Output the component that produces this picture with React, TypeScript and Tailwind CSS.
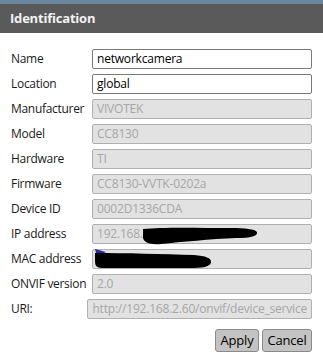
import React from "react";

type Field = { label: string; value: string; editable?: boolean; redact?: "ip" | "mac" };

const FIELDS: Field[] = [
  { label: "Name", value: "networkcamera", editable: true },
  { label: "Location", value: "global", editable: true },
  { label: "Manufacturer", value: "VIVOTEK" },
  { label: "Model", value: "CC8130" },
  { label: "Hardware", value: "TI" },
  { label: "Firmware", value: "CC8130-VVTK-0202a" },
  { label: "Device ID", value: "0002D1336CDA" },
  { label: "IP address", value: "192.168.", redact: "ip" },
  { label: "MAC address", value: "", redact: "mac" },
  { label: "ONVIF version", value: "2.0" },
  { label: "URI:", value: "http://192.168.2.60/onvif/device_service" },
];

function Redaction({ kind }: { kind: "ip" | "mac" }) {
  if (kind === "ip") {
    return (
      <svg className="absolute left-[48px] top-[1px]" width="118" height="20" viewBox="0 0 118 20">
        <path d="M2 3 C20 1 60 2 90 2 C104 2 114 3 116 6 C117 10 110 12 95 12 C70 13 40 16 20 18 C8 19 3 16 2 12 Z" fill="#000" />
      </svg>
    );
  }
  return (
    <svg className="absolute left-[1px] top-[-3px]" width="120" height="24" viewBox="0 0 120 24">
      <path d="M1 2 L3 10 L12 5 Z" fill="#2a2aa0" />
      <path d="M1 6 C30 6 70 7 100 8 C112 9 117 11 117 15 C117 20 108 21 95 21 C60 21 30 21 8 21 C2 21 1 18 1 14 Z" fill="#000" />
    </svg>
  );
}

export default function App() {
  return (
    <div className="w-[323px] h-[364px] bg-white font-['Open_Sans',sans-serif] overflow-hidden">
      <div className="h-[4px] bg-[#6d879c]" />
      <div className="h-[29px] bg-[#5a5a5a] flex items-center pl-[10px]">
        <span className="text-[13px] font-bold text-[#f2f2f2] tracking-[-0.2px]">Identification</span>
      </div>
      <div className="pl-[11px] pr-[11px] pt-[16px] flex flex-col gap-[5px]">
        {FIELDS.map((f) => (
          <div key={f.label} className="flex items-center h-[20px]">
            <span className="w-[81px] text-[12px] text-[#1a1a1a] tracking-[-0.3px]">{f.label}</span>
            <div
              className={
                f.editable
                  ? "relative flex-1 h-[20px] rounded-[2px] border border-[#7a7a7a] bg-white px-[4px] flex items-center text-[12px] text-black tracking-[-0.2px]"
                  : "relative flex-1 h-[20px] rounded-[2px] border border-[#b0b0b0] bg-[#e2e2e2] px-[4px] flex items-center text-[12px] text-[#a6a6a6] tracking-[-0.2px] whitespace-nowrap overflow-visible"
              }
            >
              {f.value}
              {f.redact && <Redaction kind={f.redact} />}
            </div>
          </div>
        ))}
        <div className="flex justify-end gap-[3px] mt-[5px]">
          <button className="w-[44px] h-[23px] rounded-[3px] border border-[#8a8a8a] bg-[#c3c3c3] text-[13px] text-black tracking-[-0.2px]">
            Apply
          </button>
          <button className="w-[50px] h-[23px] rounded-[3px] border border-[#8a8a8a] bg-[#c3c3c3] text-[13px] text-black tracking-[-0.2px]">
            Cancel
          </button>
        </div>
      </div>
    </div>
  );
}
